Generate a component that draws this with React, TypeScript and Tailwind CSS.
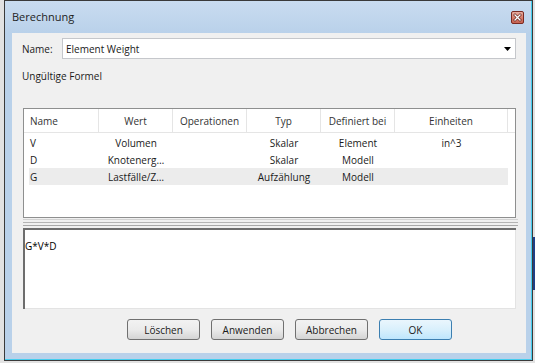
import React from "react";

const font = "font-['Open_Sans',sans-serif]";

function CloseBtn() {
  return (
    <svg width="13" height="13" viewBox="0 0 13 13">
      <defs>
        <linearGradient id="cg" x1="0" y1="0" x2="0" y2="1">
          <stop offset="0" stopColor="#eab2a6" />
          <stop offset="0.5" stopColor="#d77f6e" />
          <stop offset="1" stopColor="#c5604f" />
        </linearGradient>
      </defs>
      <rect x="0.5" y="0.5" width="12" height="12" rx="1.5" fill="url(#cg)" stroke="#7a2a22" />
      <path d="M4 4 L9 9 M9 4 L4 9" stroke="#5a1a14" strokeWidth="2.6" strokeLinecap="square" />
      <path d="M4 4 L9 9 M9 4 L4 9" stroke="#ffffff" strokeWidth="1.4" strokeLinecap="square" />
    </svg>
  );
}

function Btn({ label, primary }: { label: string; primary?: boolean }) {
  return (
    <div
      className={
        "w-[73px] h-[21px] rounded-[3px] border flex items-center justify-center text-[10px] leading-none text-[#1a1a1a] " +
        (primary
          ? "border-[#3c7fb1] bg-gradient-to-b from-[#eaf6fd] via-[#d9f0fc] to-[#bee6fd]"
          : "border-[#707070] bg-gradient-to-b from-[#f2f2f2] via-[#ebebeb] to-[#d4d4d4]")
      }
    >
      {label}
    </div>
  );
}

const rows = [
  { n: "V", w: "Volumen", o: "", t: "Skalar", d: "Element", e: "in^3", hl: false },
  { n: "D", w: "Knotenerg…", o: "", t: "Skalar", d: "Modell", e: "", hl: false },
  { n: "G", w: "Lastfälle/Z…", o: "", t: "Aufzählung", d: "Modell", e: "", hl: true },
];

export default function App() {
  return (
    <div className={"w-[535px] h-[363px] bg-[#e2e2e2] overflow-hidden flex " + font}>
      <div className="w-[4px]" />
      <div className="w-[529px] h-[361px] border border-[#3a3a3a] flex flex-col bg-[#b9d1ea]">
        <div className="flex-1 flex flex-col border-r border-b border-[#45cdee]">
          {/* title bar */}
          <div className="h-[32px] flex items-center justify-between pl-[7px] pr-[7px] bg-gradient-to-b from-[#c9dcf0] to-[#b9d1ea]">
            <span className="text-[11px] leading-none text-[#1e1e1e] pb-[1px]">Berechnung</span>
            <div className="mt-[1px]">
              <CloseBtn />
            </div>
          </div>
          {/* content */}
          <div className="ml-[7px] mr-[5px] w-[514px] h-[320px] bg-[#f0f0f0] flex flex-col">
            {/* name row */}
            <div className="flex items-center mt-[5px] h-[21px]">
              <span className="pl-[10px] w-[50px] text-[10px] text-[#1a1a1a] leading-none">Name:</span>
              <div className="w-[454px] h-[21px] bg-white border border-[#c5c7cb] flex items-center justify-between pl-[3px] pr-[4px]">
                <span className="text-[10px] leading-none text-[#1a1a1a]">Element Weight</span>
                <svg width="7" height="4" viewBox="0 0 7 4">
                  <path d="M0 0 H7 L3.5 4 Z" fill="#000" />
                </svg>
              </div>
            </div>
            <div className="mt-[10px] pl-[10px] h-[14px] flex items-center text-[10px] leading-none text-[#1a1a1a]">
              Ungültige Formel
            </div>
            {/* table */}
            <div className="mt-[25px] ml-[11px] w-[493px] h-[110px] border border-[#8e8f8f] bg-white flex flex-col text-[10px] leading-none text-[#1a1a1a]">
              <div className="flex h-[24px] border-b border-[#e5e5e5] text-[#333]">
                <div className="w-[75px] border-r border-[#e5e5e5] flex items-center pl-[6px]">Name</div>
                <div className="w-[74px] border-r border-[#e5e5e5] flex items-center justify-center">Wert</div>
                <div className="w-[74px] border-r border-[#e5e5e5] flex items-center justify-center">Operationen</div>
                <div className="w-[74px] border-r border-[#e5e5e5] flex items-center justify-center">Typ</div>
                <div className="w-[74px] border-r border-[#e5e5e5] flex items-center justify-center">Definiert bei</div>
                <div className="w-[113px] border-r border-[#e5e5e5] flex items-center justify-center">Einheiten</div>
                <div className="flex-1" />
              </div>
              <div className="pt-[1px] flex flex-col">
                {rows.map((r) => (
                  <div
                    key={r.n}
                    className={"ml-[5px] w-[479px] h-[17px] flex items-center " + (r.hl ? "bg-[#ececec]" : "")}
                  >
                    <div className="w-[70px] pl-[1px]">{r.n}</div>
                    <div className="w-[74px] text-center">{r.w}</div>
                    <div className="w-[74px] text-center">{r.o}</div>
                    <div className="w-[74px] text-center">{r.t}</div>
                    <div className="w-[74px] text-center">{r.d}</div>
                    <div className="w-[113px] text-center">{r.e}</div>
                  </div>
                ))}
              </div>
            </div>
            {/* splitter */}
            <div className="ml-[11px] w-[495px] flex flex-col">
              <div className="h-[1px]" />
              <div className="h-[1px] bg-[#d2d2d2]" />
              <div className="h-[2px]" />
              <div className="h-[1px] bg-[#b4b4b4]" />
              <div className="h-[2px]" />
              <div className="h-[1px] bg-[#a8a8a8]" />
              <div className="h-[2px]" />
            </div>
            {/* formula text area */}
            <div className="ml-[11px] w-[493px] h-[81px] bg-white border-t-2 border-l-2 border-[#6d6d6d] flex flex-col">
              <div className="border-r border-b border-[#e3e3e3] flex-1 pt-[2px]">
                <span className="text-[10px] leading-none text-black">G*V*D</span>
              </div>
            </div>
            {/* buttons */}
            <div className="mt-[10px] pl-[115px] flex gap-[11px]">
              <Btn label="Löschen" />
              <Btn label="Anwenden" />
              <Btn label="Abbrechen" />
              <Btn label="OK" primary />
            </div>
          </div>
        </div>
      </div>
      <div className="w-[2px] flex flex-col">
        <div className="h-[237px]" />
        <div className="h-[53px] bg-[#1f3f86]" />
      </div>
    </div>
  );
}
